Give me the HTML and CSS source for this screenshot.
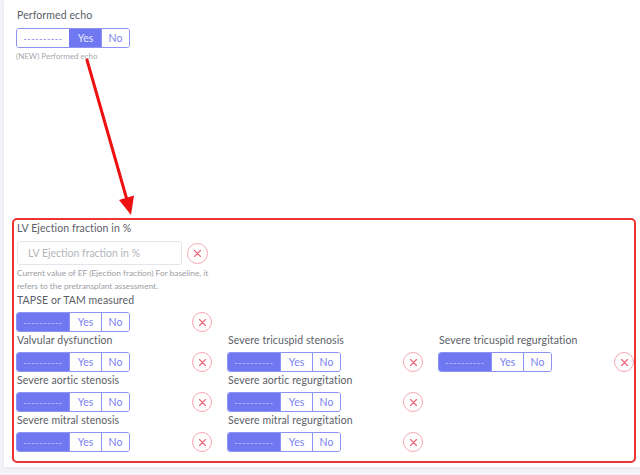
FILE: index.html
```html
<!DOCTYPE html>
<html>
<head>
<meta charset="utf-8">
<link rel="stylesheet" href="styles.css">
</head>
<body>
<div class="card">
  <div class="field top-field">
    <div class="label">Performed echo</div>
    <div class="toggle">
      <span class="seg dash">----------</span>
      <span class="seg yes on">Yes</span>
      <span class="seg no">No</span>
    </div>
    <div class="hint">(NEW) Performed echo</div>
  </div>

  <div class="highlight">
    <div class="label">LV Ejection fraction in %</div>
    <div class="input-row">
      <input class="text-input" type="text" placeholder="LV Ejection fraction in %">
      <span class="clear"><svg width="9" height="9" viewBox="0 0 9 9"><path d="M1.5 1.5 L7.5 7.5 M7.5 1.5 L1.5 7.5" stroke="#f0607a" stroke-width="1.1" stroke-linecap="round"/></svg></span>
    </div>
    <div class="help">Current value of EF (Ejection fraction) For baseline, it<br>refers to the pretransplant assessment.</div>

    <div class="label">TAPSE or TAM measured</div>
    <div class="ctrl-row single">
      <div class="toggle">
        <span class="seg dash on">----------</span>
        <span class="seg yes">Yes</span>
        <span class="seg no">No</span>
      </div>
      <span class="clear"><svg width="9" height="9" viewBox="0 0 9 9"><path d="M1.5 1.5 L7.5 7.5 M7.5 1.5 L1.5 7.5" stroke="#f0607a" stroke-width="1.1" stroke-linecap="round"/></svg></span>
    </div>

    <div class="grid">
      <div class="cell">
        <div class="label">Valvular dysfunction</div>
        <div class="ctrl-row">
          <div class="toggle"><span class="seg dash on">----------</span><span class="seg yes">Yes</span><span class="seg no">No</span></div>
          <span class="clear"><svg width="9" height="9" viewBox="0 0 9 9"><path d="M1.5 1.5 L7.5 7.5 M7.5 1.5 L1.5 7.5" stroke="#f0607a" stroke-width="1.1" stroke-linecap="round"/></svg></span>
        </div>
      </div>
      <div class="cell">
        <div class="label">Severe tricuspid stenosis</div>
        <div class="ctrl-row">
          <div class="toggle"><span class="seg dash on">----------</span><span class="seg yes">Yes</span><span class="seg no">No</span></div>
          <span class="clear"><svg width="9" height="9" viewBox="0 0 9 9"><path d="M1.5 1.5 L7.5 7.5 M7.5 1.5 L1.5 7.5" stroke="#f0607a" stroke-width="1.1" stroke-linecap="round"/></svg></span>
        </div>
      </div>
      <div class="cell">
        <div class="label">Severe tricuspid regurgitation</div>
        <div class="ctrl-row">
          <div class="toggle"><span class="seg dash on">----------</span><span class="seg yes">Yes</span><span class="seg no">No</span></div>
          <span class="clear"><svg width="9" height="9" viewBox="0 0 9 9"><path d="M1.5 1.5 L7.5 7.5 M7.5 1.5 L1.5 7.5" stroke="#f0607a" stroke-width="1.1" stroke-linecap="round"/></svg></span>
        </div>
      </div>
      <div class="cell">
        <div class="label">Severe aortic stenosis</div>
        <div class="ctrl-row">
          <div class="toggle"><span class="seg dash on">----------</span><span class="seg yes">Yes</span><span class="seg no">No</span></div>
          <span class="clear"><svg width="9" height="9" viewBox="0 0 9 9"><path d="M1.5 1.5 L7.5 7.5 M7.5 1.5 L1.5 7.5" stroke="#f0607a" stroke-width="1.1" stroke-linecap="round"/></svg></span>
        </div>
      </div>
      <div class="cell">
        <div class="label">Severe aortic regurgitation</div>
        <div class="ctrl-row">
          <div class="toggle"><span class="seg dash on">----------</span><span class="seg yes">Yes</span><span class="seg no">No</span></div>
          <span class="clear"><svg width="9" height="9" viewBox="0 0 9 9"><path d="M1.5 1.5 L7.5 7.5 M7.5 1.5 L1.5 7.5" stroke="#f0607a" stroke-width="1.1" stroke-linecap="round"/></svg></span>
        </div>
      </div>
      <div class="cell empty"></div>
      <div class="cell">
        <div class="label">Severe mitral stenosis</div>
        <div class="ctrl-row">
          <div class="toggle"><span class="seg dash on">----------</span><span class="seg yes">Yes</span><span class="seg no">No</span></div>
          <span class="clear"><svg width="9" height="9" viewBox="0 0 9 9"><path d="M1.5 1.5 L7.5 7.5 M7.5 1.5 L1.5 7.5" stroke="#f0607a" stroke-width="1.1" stroke-linecap="round"/></svg></span>
        </div>
      </div>
      <div class="cell">
        <div class="label">Severe mitral regurgitation</div>
        <div class="ctrl-row">
          <div class="toggle"><span class="seg dash on">----------</span><span class="seg yes">Yes</span><span class="seg no">No</span></div>
          <span class="clear"><svg width="9" height="9" viewBox="0 0 9 9"><path d="M1.5 1.5 L7.5 7.5 M7.5 1.5 L1.5 7.5" stroke="#f0607a" stroke-width="1.1" stroke-linecap="round"/></svg></span>
        </div>
      </div>
    </div>
  </div>
</div>

<svg class="arrow" width="640" height="475" viewBox="0 0 640 475">
  <line x1="87" y1="60" x2="127" y2="200" stroke="#ee1111" stroke-width="3" stroke-linecap="round"/>
  <polygon points="119,200 134,195.5 131,215" fill="#ee1111"/>
</svg>
</body>
</html>
```

FILE: styles.css
```css
html, body {
  margin: 0;
  padding: 0;
}
body {
  background: #f3f3f7;
  font-family: Lato, "Open Sans", sans-serif;
  width: 640px;
  height: 475px;
  overflow: hidden;
  position: relative;
}
.card {
  margin-left: 4px;
  background: #ffffff;
  padding: 8px 0 4px 12px;
  box-shadow: 0 1px 3px rgba(0,0,0,0.05);
}
.label {
  font-size: 10.5px;
  line-height: 14px;
  font-weight: 400;
  color: #5a5e66;
  white-space: nowrap;
  letter-spacing: 0.1px;
}
.top-field .label {
  margin-left: 1px;
}
.toggle {
  display: flex;
  width: 114px;
  height: 20px;
  margin-top: 6px;
  border: 1px solid #8d93f5;
  border-radius: 3px;
  box-sizing: border-box;
  overflow: hidden;
}
.seg {
  display: flex;
  align-items: center;
  justify-content: center;
  font-size: 10.5px;
  color: #7b81f2;
  background: #fff;
}
.seg.dash { width: 52px; font-size: 9px; letter-spacing: 0.6px; }
.seg.yes { width: 31px; border-left: 1px solid #8d93f5; }
.seg.no { flex: 1; border-left: 1px solid #8d93f5; }
.seg.on {
  background: #6f78f0;
  color: #e8eaff;
}
.seg.dash.on { color: #c9cdfc; }
.seg.yes.on { border-left-color: #6f78f0; }
.hint {
  font-size: 8px;
  line-height: 12px;
  margin-top: 2px;
  color: #a4a7ae;
}
.highlight {
  margin: 156px 4px 0 -4px;
  border: 2px solid #f03333;
  border-radius: 5px;
  padding: 1px 2px 8px 2px;
}
.highlight > .label { margin-left: 1px; }
.input-row {
  display: flex;
  align-items: center;
  margin-top: 6px;
  margin-left: 1px;
  gap: 5px;
}
.text-input {
  width: 165px;
  height: 24px;
  box-sizing: border-box;
  border: 1px solid #e4e4ea;
  border-radius: 3px;
  padding: 0 0 0 10px;
  font-family: Lato, "Open Sans", sans-serif;
  font-size: 10.5px;
  outline: none;
}
.text-input::placeholder { color: #b3b5bb; }
.clear {
  width: 21px;
  height: 21px;
  box-sizing: border-box;
  border: 1px solid #f6a8b4;
  border-radius: 50%;
  display: flex;
  align-items: center;
  justify-content: center;
}
.ctrl-row .clear { height: 20px; width: 20px; }
.help {
  font-size: 8.3px;
  line-height: 13px;
  color: #9b9ea5;
  margin-top: 2px;
  margin-left: 1px;
}
.ctrl-row {
  display: flex;
  align-items: center;
  justify-content: space-between;
  width: 196px;
  margin-top: 5px;
  margin-bottom: 1px;
}
.ctrl-row .toggle { margin-top: 0; }
.grid {
  display: grid;
  grid-template-columns: repeat(3, 195px);
  column-gap: 16px;
  row-gap: 0;
}
.cell .label { margin-left: 1px; }
.arrow {
  position: absolute;
  left: 0;
  top: 0;
  pointer-events: none;
}
```
